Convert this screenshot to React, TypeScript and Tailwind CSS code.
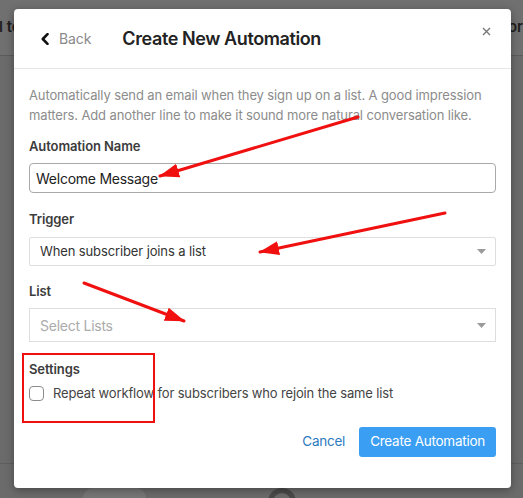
import React from 'react';

function Caret() {
  return (
    <svg width="9" height="5" viewBox="0 0 9 5" className="shrink-0">
      <path d="M0 0 L9 0 L4.5 5 Z" fill="#9a9a9a" />
    </svg>
  );
}

function Annotations() {
  return (
    <svg
      width="523"
      height="498"
      viewBox="0 0 523 498"
      className="pointer-events-none absolute left-0 top-0"
    >
      <defs>
        <marker
          id="head"
          markerWidth="20"
          markerHeight="16"
          refX="19"
          refY="8"
          orient="auto"
          markerUnits="userSpaceOnUse"
        >
          <path d="M0 1 L20 8 L0 15 Z" fill="#f01010" />
        </marker>
      </defs>
      <g stroke="#f01010" strokeWidth="3" strokeLinecap="round">
        <line x1="358" y1="117" x2="160" y2="176" markerEnd="url(#head)" />
        <line x1="445" y1="213" x2="260" y2="252" markerEnd="url(#head)" />
        <line x1="84" y1="283" x2="184" y2="321" markerEnd="url(#head)" />
      </g>
    </svg>
  );
}

export default function App() {
  return (
    <div
      className="relative h-[498px] w-[523px] overflow-hidden bg-[#6b6b6b]"
      style={{ fontFamily: 'Inter, "Open Sans", sans-serif' }}
    >
      {/* page behind the overlay */}
      <div className="flex h-[56px] items-center justify-between border-b border-[#5c5c5c] bg-[#707070] text-[15px] font-semibold text-[#1e1e1e]">
        <span className="-ml-[1px]">l to</span>
        <span className="mr-0">or</span>
      </div>
      <div className="h-[408px] border-b border-[#5e5e5e]" />
      <div className="flex items-start gap-[122px] pl-[83px] pt-[24px]">
        <div className="h-[20px] w-[63px] rounded-full bg-[#777]" />
        <div className="h-[28px] w-[28px] rounded-full border-[5px] border-[#4a4a4a]" />
      </div>

      {/* modal */}
      <div className="absolute left-[14px] top-[9px] w-[497px] rounded-[4px] bg-white shadow-[0_2px_8px_rgba(0,0,0,0.35)]">
        <div className="flex h-[60px] items-center border-b border-[#e6e6e6] pl-[27px] pr-[20px]">
          <button className="flex items-center gap-[10px] text-[14px] tracking-[-0.1px] text-[#8a8a8a]">
            <svg width="8" height="12" viewBox="0 0 8 12">
              <path
                d="M6.5 1.2 L1.8 6 L6.5 10.8"
                fill="none"
                stroke="#111"
                strokeWidth="2.6"
                strokeLinecap="round"
                strokeLinejoin="round"
              />
            </svg>
            Back
          </button>
          <h2 className="ml-[31px] text-[18px] font-semibold tracking-[-0.4px] text-[#222]">
            Create New Automation
          </h2>
          <button className="mb-[14px] ml-auto">
            <svg width="9" height="9" viewBox="0 0 9 9">
              <path d="M1 1 L8 8 M8 1 L1 8" stroke="#777" strokeWidth="1.4" />
            </svg>
          </button>
        </div>

        <div className="px-[15px] pb-[31px] pt-[16px]">
          <p className="text-[13px] leading-[20px] tracking-[-0.12px] text-[#8c8c8c]">
            Automatically send an email when they sign up on a list. A good impression
            matters. Add another line to make it sound more natural conversation like.
          </p>

          <label className="mt-[11px] block text-[13px] font-semibold leading-[20px] tracking-[-0.1px] text-[#3c3c3c]">
            Automation Name
          </label>
          <div className="mt-[7px] flex h-[30px] items-center rounded-[4px] border border-[#a9a9a9] px-[6px] text-[14px] tracking-[-0.25px] text-[#222]">
            Welcome Message
          </div>

          <label className="mt-[16px] block text-[13px] font-semibold leading-[20px] tracking-[-0.1px] text-[#3c3c3c]">
            Trigger
          </label>
          <div className="mt-[8px] flex h-[29px] items-center justify-between rounded-[2px] border border-[#dedede] pl-[10px] pr-[9px] text-[13px] tracking-[-0.12px] text-[#333]">
            <span>When subscriber joins a list</span>
            <Caret />
          </div>

          <label className="mt-[15px] block text-[13px] font-semibold leading-[20px] tracking-[-0.1px] text-[#3c3c3c]">
            List
          </label>
          <div className="mt-[7px] flex h-[34px] items-center justify-between border border-[#dedede] pl-[10px] pr-[9px] text-[14px] tracking-[-0.25px] text-[#ababab]">
            <span>Select Lists</span>
            <Caret />
          </div>

          <div className="mt-[17px] text-[13px] font-semibold leading-[20px] tracking-[-0.1px] text-[#3c3c3c]">
            Settings
          </div>
          <label className="mt-[5px] flex items-center gap-[9px] text-[13px] tracking-[-0.15px] text-[#444]">
            <span className="h-[15px] w-[15px] rounded-[4px] border border-[#8c8c8c] bg-white" />
            Repeat workflow for subscribers who rejoin the same list
          </label>

          <div className="mt-[23px] flex items-center justify-end gap-[14px]">
            <button className="text-[13.5px] tracking-[-0.25px] text-[#2d7bbf]">Cancel</button>
            <button className="h-[30px] rounded-[3px] bg-[#3a9ef2] px-[11px] text-[13.5px] tracking-[-0.25px] text-white">
              Create Automation
            </button>
          </div>
        </div>
      </div>

      <div className="pointer-events-none absolute left-[22px] top-[353px] h-[70px] w-[133px] border-2 border-[#f01010]" />
      <Annotations />
    </div>
  );
}
